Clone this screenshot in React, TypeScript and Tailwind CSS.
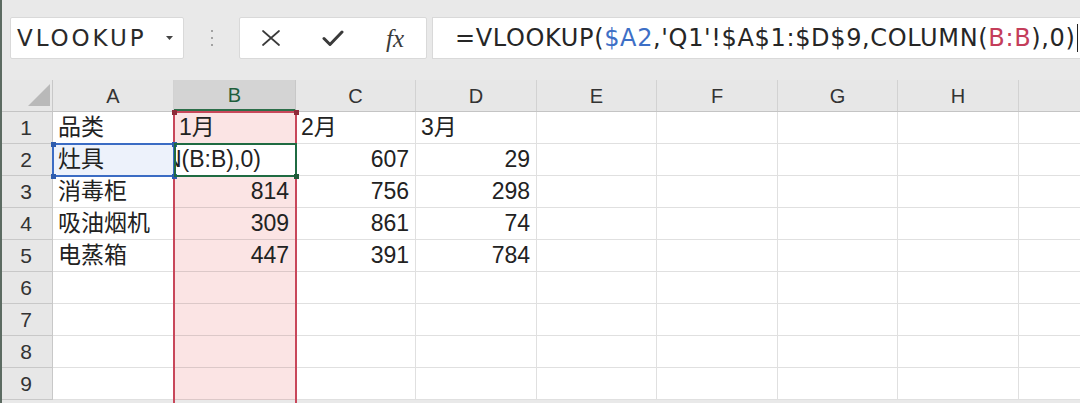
import React from "react";

const CELL_FONT = "'Liberation Sans', 'Noto Sans CJK SC', sans-serif";
const colWidths = [121, 122, 120, 121, 120, 121, 120, 121, 140];
const colNames = ["A", "B", "C", "D", "E", "F", "G", "H", "I"];

type Cell = { t: string; align?: "l" | "r" };
const data: Cell[][] = [
  [{ t: "品类" }, { t: "1月" }, { t: "2月" }, { t: "3月" }],
  [{ t: "灶具" }, { t: "" }, { t: "607", align: "r" }, { t: "29", align: "r" }],
  [{ t: "消毒柜" }, { t: "814", align: "r" }, { t: "756", align: "r" }, { t: "298", align: "r" }],
  [{ t: "吸油烟机" }, { t: "309", align: "r" }, { t: "861", align: "r" }, { t: "74", align: "r" }],
  [{ t: "电蒸箱" }, { t: "447", align: "r" }, { t: "391", align: "r" }, { t: "784", align: "r" }],
  [],
  [],
  [],
  [],
];

function Handle({ x, y, color }: { x: number; y: number; color: string }) {
  return (
    <div
      className="absolute w-[5px] h-[5px]"
      style={{ left: x - 2.5, top: y - 2.5, backgroundColor: color }}
    />
  );
}

export default function App() {
  return (
    <div
      className="relative w-[1080px] h-[403px] overflow-hidden bg-[#e9e9e9]"
      style={{ fontFamily: CELL_FONT }}
    >
      {/* top formula bar */}
      <div className="h-[80px] flex items-start pt-[17px] pl-[10px]">
        <div className="w-[174px] h-[42px] bg-white border border-[#d9d9d9] rounded-[2px] flex items-center pl-[6px] pr-[10px]">
          <span
            className="flex-1 text-[23px] leading-none text-[#2a2a2a] tracking-[2.9px]"
            style={{ fontFamily: "'DejaVu Sans', sans-serif" }}
          >
            VLOOKUP
          </span>
          <svg width="7" height="4" viewBox="0 0 7 4">
            <path d="M0 0 L7 0 L3.5 4 Z" fill="#444" />
          </svg>
        </div>
        <div className="w-[55px] h-[42px] flex flex-col items-center justify-center gap-[5px]">
          <div className="w-[2px] h-[2px] rounded-full bg-[#8a8a8a]" />
          <div className="w-[2px] h-[2px] rounded-full bg-[#8a8a8a]" />
          <div className="w-[2px] h-[2px] rounded-full bg-[#8a8a8a]" />
        </div>
        <div className="w-[188px] h-[42px] bg-white border border-[#d9d9d9] rounded-[2px] flex items-center">
          <div className="w-[62px] flex justify-center">
            <svg width="20" height="16" viewBox="0 0 20 16">
              <path d="M2 1 L18 15 M18 1 L2 15" stroke="#3a3a3a" strokeWidth="1.7" strokeLinecap="round" />
            </svg>
          </div>
          <div className="w-[62px] flex justify-center">
            <svg width="22" height="17" viewBox="0 0 22 17">
              <path d="M2 8.5 L8 14.5 L20 2" stroke="#3a3a3a" strokeWidth="3" fill="none" strokeLinecap="round" strokeLinejoin="round" />
            </svg>
          </div>
          <div className="w-[62px] flex justify-center">
            <span
              className="text-[25px] leading-none italic text-[#3a3a3a]"
              style={{ fontFamily: "'Liberation Serif', serif" }}
            >
              fx
            </span>
          </div>
        </div>
        <div className="ml-[5px] flex-1 h-[42px] bg-white border border-[#d9d9d9] border-r-0 flex items-center pl-[22px]">
          <span
            className="text-[24px] leading-none text-[#262626] whitespace-nowrap tracking-[0.65px]"
            style={{ fontFamily: "'DejaVu Sans', sans-serif" }}
          >
            =VLOOKUP(<span className="text-[#3d6fc6]">$A2</span>,'Q1'!$A$1:$D$9,COLUMN(<span className="text-[#c43d5a]">B:B</span>),0)
          </span>
          <div className="ml-[1px] w-[1px] h-[28px] bg-[#222]" />
        </div>
      </div>

      {/* grid */}
      <div className="relative">
        {/* column header row */}
        <div className="flex h-[32px] border-b border-[#c4c4c4] bg-[#e7e7e7]">
          <div className="w-[53px] shrink-0 border-r border-[#c8c8c8] relative">
            <svg className="absolute left-[28px] top-[4px]" width="22" height="22" viewBox="0 0 22 22">
              <path d="M22 0 L22 22 L0 22 Z" fill="#b9b9b9" />
            </svg>
          </div>
          {colNames.map((c, i) => (
            <div
              key={c}
              className={
                i === 1
                  ? "shrink-0 flex items-center justify-center border-r border-[#c8c8c8] bg-[#d4d4d4] text-[#1f5f3c] border-b-2 border-b-[#2c6e49]"
                  : "shrink-0 flex items-center justify-center border-r border-[#d2d2d2] text-[#333]"
              }
              style={{ width: colWidths[i] }}
            >
              <span className="text-[20px] leading-none">{c}</span>
            </div>
          ))}
        </div>

        {/* rows */}
        {data.map((row, r) => (
          <div key={r} className="flex h-[32px]">
            <div className="w-[53px] shrink-0 bg-[#e7e7e7] border-r border-b border-[#c8c8c8] flex items-center justify-center">
              <span className="text-[21px] leading-none text-[#333]">{r + 1}</span>
            </div>
            {colNames.map((c, i) => {
              const cell = row[i];
              let bg = "bg-white";
              if (i === 1) bg = r === 1 ? "bg-white" : "bg-[#fbe4e4]";
              if (i === 0 && r === 1) bg = "bg-[#edf2fb]";
              return (
                <div
                  key={c}
                  className={`shrink-0 overflow-hidden border-r border-b border-black/[0.12] flex items-center ${bg} ${
                    cell && cell.align === "r" ? "justify-end pr-[6px]" : "justify-start pl-[5px]"
                  }`}
                  style={{ width: colWidths[i] }}
                >
                  {cell && cell.t && (
                    <span className="text-[23px] leading-none text-[#222] whitespace-nowrap">{cell.t}</span>
                  )}
                  {r === 1 && i === 1 && (
                    <span className="text-[23px] leading-none text-[#222] whitespace-nowrap -ml-[14px]">
                      N(B:B),0)
                    </span>
                  )}
                </div>
              );
            })}
          </div>
        ))}

        {/* reference range B:B */}
        <div className="absolute left-[173px] top-[31px] w-[124px] h-[320px] border-2 border-[#c8475a] pointer-events-none" />
        <Handle x={174} y={32} color="#8e2a38" />
        <Handle x={296} y={32} color="#8e2a38" />

        {/* reference A2 */}
        <div className="absolute left-[52px] top-[63px] w-[123px] h-[34px] border-2 border-[#3b6cc4] pointer-events-none" />
        <Handle x={53} y={64} color="#2e5cae" />
        <Handle x={174} y={64} color="#2e5cae" />
        <Handle x={53} y={96} color="#2e5cae" />
        <Handle x={174} y={96} color="#2e5cae" />

        {/* active cell B2 */}
        <div className="absolute left-[174px] top-[63px] w-[123px] h-[34px] border-2 border-[#1f6b42] pointer-events-none" />
        <Handle x={296} y={96} color="#1f5a38" />
      </div>

      {/* app left edge */}
      <div className="absolute left-0 top-0 w-[2px] h-[403px] bg-[#5c6b62]" />
    </div>
  );
}
